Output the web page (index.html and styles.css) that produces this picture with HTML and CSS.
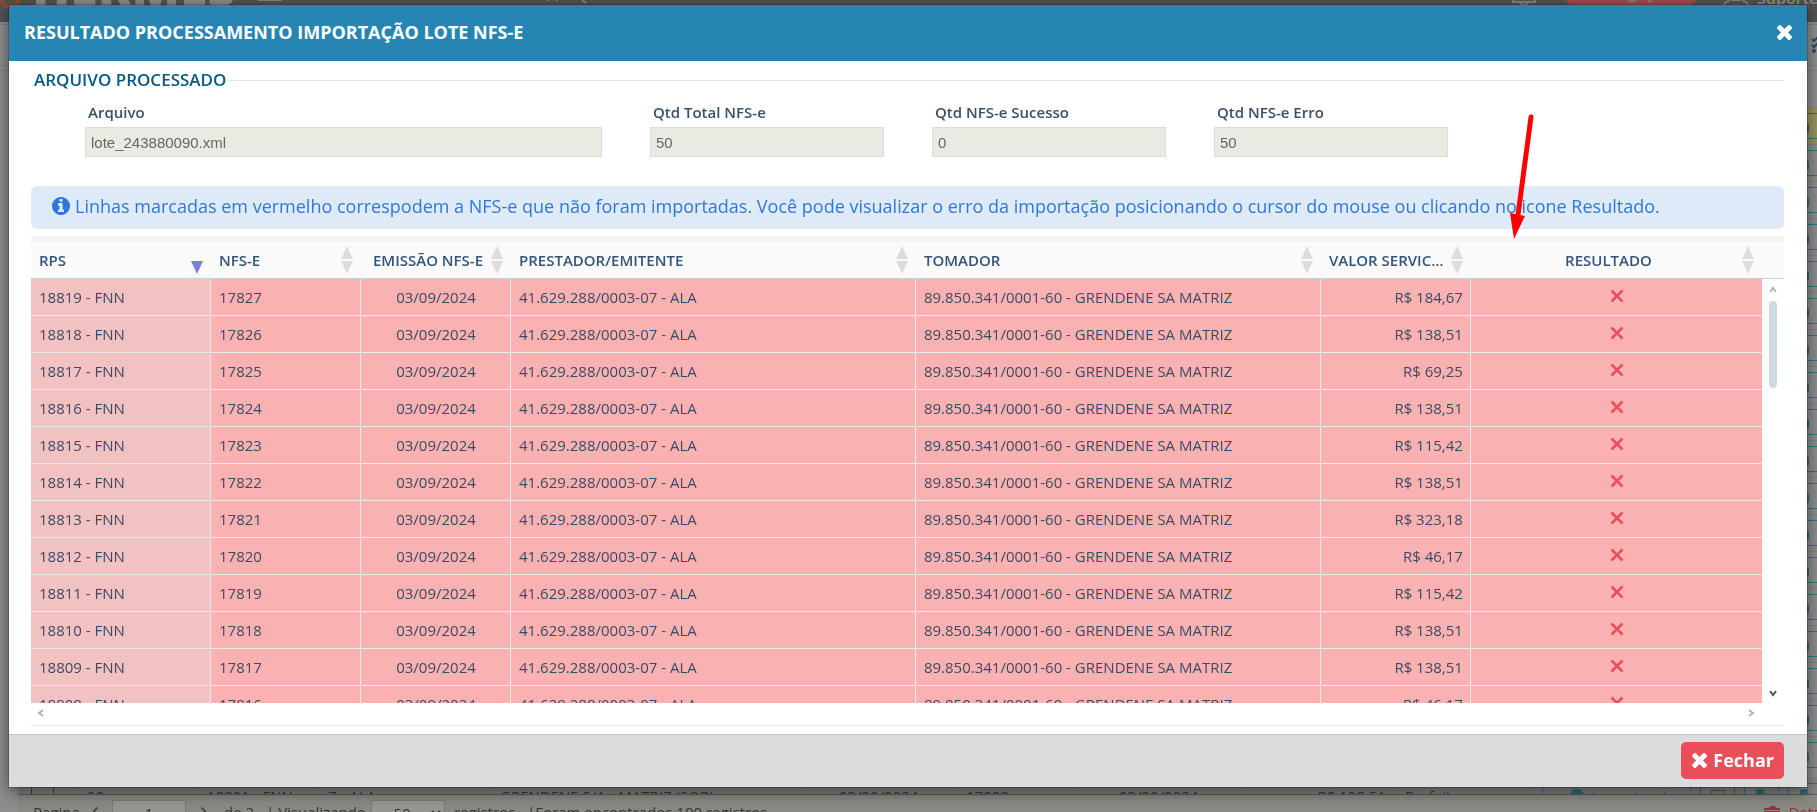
FILE: index.html
```html
<!DOCTYPE html>
<html lang="pt-BR">
<head>
<meta charset="utf-8">
<title>Resultado Processamento Importação Lote NFS-e</title>
<link rel="stylesheet" href="styles.css">
</head>
<body>
<svg class="defs" aria-hidden="true">
  <symbol id="times" viewBox="110 366 1188 1188"><path d="M1298 1322q0 40-28 68l-136 136q-28 28-68 28t-68-28l-294-294-294 294q-28 28-68 28t-68-28l-136-136q-28-28-28-68t28-68l294-294-294-294q-28-28-28-68t28-68l136-136q28-28 68-28t68 28l294 294 294-294q28-28 68-28t68 28l136 136q28 28 28 68t-28 68l-294 294 294 294q28 28 28 68z"/></symbol>
  <symbol id="info" viewBox="128 128 1536 1536"><path d="M1152 1376v-160q0-14-9-23t-23-9h-96v-512q0-14-9-23t-23-9h-320q-14 0-23 9t-9 23v160q0 14 9 23t23 9h96v320h-96q-14 0-23 9t-9 23v160q0 14 9 23t23 9h448q14 0 23-9t9-23zm-128-896v-160q0-14-9-23t-23-9h-192q-14 0-23 9t-9 23v160q0 14 9 23t23 9h192q14 0 23-9t9-23zm640 416q0 209-103 385.5t-279.5 279.5-385.5 103-385.5-103-279.5-279.5-103-385.5 103-385.5 279.5-279.5 385.5-103 385.5 103 279.5 279.5 103 385.5z"/></symbol>
  <symbol id="fail" viewBox="0 0 14 14"><path d="M1.5 1.5l11 11M12.5 1.5l-11 11" fill="none" stroke="currentColor" stroke-width="2.6"/></symbol>
  <symbol id="sort" viewBox="0 0 12 28"><path d="M6 0l6 13H0zM0 15h12L6 28z"/></symbol>
  <symbol id="chev" viewBox="0 0 8 8"><path d="M1 6l3-4 3 4" fill="none" stroke="currentColor" stroke-width="2"/></symbol>
  <symbol id="file" viewBox="0 0 14 16"><path d="M0 2q0-2 2-2h7v5h5v9q0 2-2 2H2q-2 0-2-2z"/></symbol>
</svg>

<div class="app">
  <header class="topbar">
    <svg class="brand-mark" viewBox="0 0 24 24"><circle cx="10" cy="-2" r="9" fill="none" stroke="#8a4a33" stroke-width="4"/></svg>
    <span class="brand">HERMES</span>
    <span class="menu-line"></span>
    <svg class="top-marks" viewBox="0 0 50 22"><path d="M2 0v1M11 0v1M36 0l4 3" stroke="#808080" stroke-width="2"/></svg>
    <svg class="monitor" viewBox="0 0 24 22"><path d="M1 0v2h22V0M8 2l2 3h4l2-3" fill="none" stroke="#808080" stroke-width="2"/></svg>
    <span class="pill">Navegação</span>
    <svg class="headset" viewBox="0 0 28 22"><path d="M2 6q0-5 6-5M26 6q0-5-6-5M9 0h10" fill="none" stroke="#808080" stroke-width="2"/></svg>
    <span class="support">Suporte</span>
  </header>
  <div class="toolbar"><svg class="checks" viewBox="0 0 10 20"><path d="M1 4l2 2 5-5M1 10l2 2 5-5" fill="none" stroke="#2b4a66" stroke-width="2"/><circle cx="3" cy="16" r="2" fill="#2b4a66"/></svg></div>
  <div class="subbar"></div>
  <div class="bg-rows">
    <div class="bg-row current"><button class="bg-btn" aria-label="Arquivo"><svg><use href="#file"/></svg></button></div>
    <div class="bg-row"><button class="bg-btn" aria-label="Arquivo"><svg><use href="#file"/></svg></button></div>
    <div class="bg-row"><button class="bg-btn" aria-label="Arquivo"><svg><use href="#file"/></svg></button></div>
    <div class="bg-row"><button class="bg-btn" aria-label="Arquivo"><svg><use href="#file"/></svg></button></div>
    <div class="bg-row"><button class="bg-btn" aria-label="Arquivo"><svg><use href="#file"/></svg></button></div>
    <div class="bg-row"><button class="bg-btn" aria-label="Arquivo"><svg><use href="#file"/></svg></button></div>
    <div class="bg-row"><button class="bg-btn" aria-label="Arquivo"><svg><use href="#file"/></svg></button></div>
    <div class="bg-row"><button class="bg-btn" aria-label="Arquivo"><svg><use href="#file"/></svg></button></div>
    <div class="bg-row"><button class="bg-btn" aria-label="Arquivo"><svg><use href="#file"/></svg></button></div>
    <div class="bg-row"><button class="bg-btn" aria-label="Arquivo"><svg><use href="#file"/></svg></button></div>
    <div class="bg-row"><button class="bg-btn" aria-label="Arquivo"><svg><use href="#file"/></svg></button></div>
    <div class="bg-row"><button class="bg-btn" aria-label="Arquivo"><svg><use href="#file"/></svg></button></div>
    <div class="bg-row"><button class="bg-btn" aria-label="Arquivo"><svg><use href="#file"/></svg></button></div>
    <div class="bg-row"><button class="bg-btn" aria-label="Arquivo"><svg><use href="#file"/></svg></button></div>
    <div class="bg-row"><button class="bg-btn" aria-label="Arquivo"><svg><use href="#file"/></svg></button></div>
    <div class="bg-row"><button class="bg-btn" aria-label="Arquivo"><svg><use href="#file"/></svg></button></div>
    <div class="bg-row"><button class="bg-btn" aria-label="Arquivo"><svg><use href="#file"/></svg></button></div>
    <div class="bg-row"><button class="bg-btn" aria-label="Arquivo"><svg><use href="#file"/></svg></button></div>
  </div>
  <div class="bg-last">
    <span class="dark"></span><span class="dark"></span><span>20</span><span>18801 - FNN</span><span>7 - ALA</span><span>GRENDENE S/A - MATRIZ (SOB)</span><span class="mid">03/09/2024</span><span>17808</span><span class="mid">03/09/2024</span><span class="end">R$ 138,51</span><span>Perfeito</span>
    <div class="bg-actions">
      <button class="status"><i></i>Importando</button>
      <button class="act grey" aria-label="E-mail"><b></b></button>
      <button class="act" aria-label="PDF"><svg><use href="#file"/></svg></button>
      <button class="act" aria-label="XML"><svg><use href="#file"/></svg></button>
    </div>
  </div>
  <footer class="pager">
    <label for="pg" class="pg-label">Pagina</label>
    <svg class="pg-arrow" viewBox="0 0 10 16"><path d="M8 1L2 8l6 7" fill="none" stroke="#3a3a38" stroke-width="2"/></svg>
    <input id="pg" class="pg-field" value="1">
    <svg class="pg-arrow next" viewBox="0 0 10 16"><path d="M2 1l6 7-6 7" fill="none" stroke="#3a3a38" stroke-width="2"/></svg>
    <span class="pg-total">de 2</span><label for="pp" class="pg-view">| Visualizando</label>
    <select id="pp" class="pg-field"><option>50</option></select>
    <span class="pg-reg">registros.</span><span>|Foram encontrados 100 registros</span>
    <a class="details" href="#"><svg viewBox="0 0 16 16"><path d="M0 3h5l1-2h5l1 2h4v2H0zM0 6h16v10H0z"/></svg>Detalhes</a>
  </footer>
</div>

<div class="modal" role="dialog" aria-labelledby="title">
  <div class="modal-head">
    <h1 id="title">RESULTADO PROCESSAMENTO IMPORTAÇÃO LOTE NFS-E</h1>
    <button class="close" aria-label="Fechar"><svg><use href="#times"/></svg></button>
  </div>
  <div class="modal-body">
    <h2 class="legend">ARQUIVO PROCESSADO</h2>
    <div class="fields">
      <div class="field"><label for="f1">Arquivo</label><input id="f1" readonly value="lote_243880090.xml"></div>
      <div class="field"><label for="f2">Qtd Total NFS-e</label><input id="f2" readonly value="50"></div>
      <div class="field"><label for="f3">Qtd NFS-e Sucesso</label><input id="f3" readonly value="0"></div>
      <div class="field"><label for="f4">Qtd NFS-e Erro</label><input id="f4" readonly value="50"></div>
    </div>
    <p class="alert"><svg><use href="#info"/></svg>Linhas marcadas em vermelho correspodem a NFS-e que não foram importadas. Você pode visualizar o erro da importação posicionando o cursor do mouse ou clicando no icone Resultado.</p>
    <div class="grid">
      <table>
        <colgroup><col class="c-rps"><col class="c-s"><col class="c-s"><col class="c-l"><col class="c-l"><col class="c-s"><col><col class="c-sb"></colgroup>
        <thead>
          <tr>
            <th><div class="th"><span>RPS</span><svg class="sorted"><use href="#sort"/></svg></div></th>
            <th><div class="th"><span>NFS-E</span><svg><use href="#sort"/></svg></div></th>
            <th><div class="th c"><span>EMISSÃO NFS-E</span><svg><use href="#sort"/></svg></div></th>
            <th><div class="th"><span>PRESTADOR/EMITENTE</span><svg><use href="#sort"/></svg></div></th>
            <th><div class="th"><span>TOMADOR</span><svg><use href="#sort"/></svg></div></th>
            <th><div class="th"><span>VALOR SERVICOS</span><svg><use href="#sort"/></svg></div></th>
            <th><div class="th c"><span>RESULTADO</span><svg><use href="#sort"/></svg></div></th>
            <th></th>
          </tr>
        </thead>
        <tbody>
          <tr><td>18819 - FNN</td><td>17827</td><td>03/09/2024</td><td>41.629.288/0003-07 - ALA</td><td>89.850.341/0001-60 - GRENDENE SA MATRIZ</td><td>R$ 184,67</td><td><svg><use href="#fail"/></svg></td></tr>
          <tr><td>18818 - FNN</td><td>17826</td><td>03/09/2024</td><td>41.629.288/0003-07 - ALA</td><td>89.850.341/0001-60 - GRENDENE SA MATRIZ</td><td>R$ 138,51</td><td><svg><use href="#fail"/></svg></td></tr>
          <tr><td>18817 - FNN</td><td>17825</td><td>03/09/2024</td><td>41.629.288/0003-07 - ALA</td><td>89.850.341/0001-60 - GRENDENE SA MATRIZ</td><td>R$ 69,25</td><td><svg><use href="#fail"/></svg></td></tr>
          <tr><td>18816 - FNN</td><td>17824</td><td>03/09/2024</td><td>41.629.288/0003-07 - ALA</td><td>89.850.341/0001-60 - GRENDENE SA MATRIZ</td><td>R$ 138,51</td><td><svg><use href="#fail"/></svg></td></tr>
          <tr><td>18815 - FNN</td><td>17823</td><td>03/09/2024</td><td>41.629.288/0003-07 - ALA</td><td>89.850.341/0001-60 - GRENDENE SA MATRIZ</td><td>R$ 115,42</td><td><svg><use href="#fail"/></svg></td></tr>
          <tr><td>18814 - FNN</td><td>17822</td><td>03/09/2024</td><td>41.629.288/0003-07 - ALA</td><td>89.850.341/0001-60 - GRENDENE SA MATRIZ</td><td>R$ 138,51</td><td><svg><use href="#fail"/></svg></td></tr>
          <tr><td>18813 - FNN</td><td>17821</td><td>03/09/2024</td><td>41.629.288/0003-07 - ALA</td><td>89.850.341/0001-60 - GRENDENE SA MATRIZ</td><td>R$ 323,18</td><td><svg><use href="#fail"/></svg></td></tr>
          <tr><td>18812 - FNN</td><td>17820</td><td>03/09/2024</td><td>41.629.288/0003-07 - ALA</td><td>89.850.341/0001-60 - GRENDENE SA MATRIZ</td><td>R$ 46,17</td><td><svg><use href="#fail"/></svg></td></tr>
          <tr><td>18811 - FNN</td><td>17819</td><td>03/09/2024</td><td>41.629.288/0003-07 - ALA</td><td>89.850.341/0001-60 - GRENDENE SA MATRIZ</td><td>R$ 115,42</td><td><svg><use href="#fail"/></svg></td></tr>
          <tr><td>18810 - FNN</td><td>17818</td><td>03/09/2024</td><td>41.629.288/0003-07 - ALA</td><td>89.850.341/0001-60 - GRENDENE SA MATRIZ</td><td>R$ 138,51</td><td><svg><use href="#fail"/></svg></td></tr>
          <tr><td>18809 - FNN</td><td>17817</td><td>03/09/2024</td><td>41.629.288/0003-07 - ALA</td><td>89.850.341/0001-60 - GRENDENE SA MATRIZ</td><td>R$ 138,51</td><td><svg><use href="#fail"/></svg></td></tr>
          <tr><td>18808 - FNN</td><td>17816</td><td>03/09/2024</td><td>41.629.288/0003-07 - ALA</td><td>89.850.341/0001-60 - GRENDENE SA MATRIZ</td><td>R$ 46,17</td><td><svg><use href="#fail"/></svg></td></tr>
        </tbody>
      </table>
      <div class="vbar"><svg><use href="#chev"/></svg><div class="thumb"></div><svg class="down"><use href="#chev"/></svg></div>
    </div>
    <div class="hbar"><svg class="left"><use href="#chev"/></svg><svg class="right"><use href="#chev"/></svg></div>
  </div>
  <div class="modal-foot">
    <button class="btn-close"><svg><use href="#times"/></svg>Fechar</button>
  </div>
  <svg class="pointer" viewBox="0 0 32 130"><path d="M23 4L10 102" stroke="#f00" stroke-width="5" stroke-linecap="round"/><path d="M2 100l15 3L6 126z" fill="#f00"/></svg>
</div>
</body>
</html>
```

FILE: styles.css
```css
* { box-sizing: border-box; }
html, body { height: 100%; margin: 0; }
body { font: 15px/20px "Open Sans", "Noto Sans", sans-serif; color: #3b4b63; overflow: hidden; }
button, input, select { font: inherit; margin: 0; }
svg { fill: currentColor; flex: none; }
.defs { position: absolute; width: 0; height: 0; }

/* page behind the dialog */
.app { height: 100vh; display: flex; flex-direction: column; background: #8e8e8e; overflow: hidden; color: #33363a; }
.topbar { flex: none; height: 22px; display: flex; background: #515151; overflow: hidden; color: #8c8c8c; }
.brand-mark { width: 24px; height: 24px; }
.brand { margin-left: 8px; width: 216px; font-size: 50px; font-weight: 800; line-height: 22px; margin-top: -24px; color: #888; }
.menu-line { width: 24px; height: 1px; margin-left: 10px; background: #808080; }
.top-marks { width: 50px; height: 22px; margin-left: 264px; }
.monitor { width: 24px; height: 22px; margin-left: auto; }
.pill { height: 14px; width: 136px; margin-top: -8px; margin-left: 27px; border-radius: 0 0 20px 20px; background: #9c494c; font-weight: 600; line-height: 2px; text-align: center; }
.headset { width: 28px; height: 22px; margin: 0 7px 0 23px; }
.support { width: 60px; margin-top: -2px; font-size: 16px; font-weight: 600; line-height: 0; }
.toolbar { flex: none; height: 42px; margin-top: 2px; border: solid #75808a; border-width: 1px 0; display: flex; align-items: center; justify-content: flex-end; }
.checks { width: 10px; height: 20px; margin-right: -4px; }
.subbar { flex: none; height: 37px; margin-top: 4px; border-top: 1px solid #808080; }
.bg-rows { flex: 1 1 0; min-height: 0; overflow: hidden; margin-left: 18px; }
.bg-row { height: 37px; display: flex; align-items: center; justify-content: flex-end; border-top: 1px solid #808080; background: #8c8c8c; }
.bg-row.current { background: #979260; }
.bg-btn { width: 30px; height: 26px; margin-right: -10px; border: 1px solid #2c7680; background: none; padding: 0; display: flex; align-items: center; color: #2c6c74; }
.bg-btn svg { width: 11px; height: 13px; }
.bg-last { flex: none; height: 18px; margin-left: 18px; padding-left: 13px; overflow: hidden; display: grid; grid-template-columns: 22px 24px 120px 121px 172px 310px 156px 120px 164px 155px 138px 1fr; background: #848484; border-bottom: 1px solid #5b5b5b; line-height: 20px; padding-top: 9px; }
.bg-last span { border-left: 1px solid #777; padding-left: 9px; white-space: nowrap; }
.bg-last .dark { border-color: #444; }
.bg-last .mid { text-align: center; padding: 0; }
.bg-last .end { text-align: right; padding-right: 9px; }
.bg-actions { display: flex; gap: 9px; padding-left: 8px; margin-top: -3px; border-left: 1px solid #777; }
.status, .act { height: 26px; border: 1px solid #2c7680; background: none; color: #2c6c74; padding: 0; flex: none; }
.status { width: 149px; display: flex; align-items: center; gap: 8px; padding-left: 27px; }
.status i { width: 14px; height: 14px; border-radius: 50%; background: currentColor; }
.act { width: 35px; display: flex; align-items: center; justify-content: center; }
.act svg { width: 12px; height: 14px; }
.act.grey { border-color: #555; }
.act b { width: 14px; height: 12px; border: 1px solid #555; }
.pager { flex: none; height: 17px; margin-left: 18px; padding: 5px 0 0 15px; display: flex; background: #8a8a84; line-height: 24px; overflow: hidden; white-space: nowrap; }
.pg-label { width: 46px; }
.pg-arrow { width: 8px; height: 14px; margin: 6px 13px 0 12px; }
.pg-arrow.next { margin: 6px 16px 0 14px; }
.pg-field { width: 74px; height: 26px; padding: 0; border: 1px solid #7a7a7a; background: #969692; color: inherit; text-align: center; flex: none; }
.pg-total { width: 42px; }
.pg-view { width: 105px; }
.pg-reg { width: 73px; margin-left: 9px; }
.details { margin-left: auto; margin-right: -33px; color: #93343b; text-decoration: none; display: flex; gap: 8px; }
.details svg { width: 16px; height: 16px; margin-top: 5px; }

/* dialog */
.modal { position: fixed; top: 5px; right: 10px; bottom: 25px; left: 9px; display: flex; flex-direction: column; background: #fff; box-shadow: 0 5px 15px rgba(0, 0, 0, .5), 0 0 0 1px rgba(0, 0, 0, .2); }
.modal-head { flex: none; height: 56px; padding: 0 15px 2px; display: flex; align-items: center; justify-content: space-between; background: #2685b2; color: #fff; }
.modal-head h1 { margin: 0; font-size: 18px; line-height: 24px; font-weight: 700; }
.close { border: 0; background: none; padding: 0; color: inherit; display: flex; }
.close svg { width: 15px; height: 15px; }
.modal-body { flex: 1; min-height: 0; display: flex; flex-direction: column; padding: 7px 23px 8px 22px; }
.legend { margin: 0; padding-left: 3px; display: flex; align-items: center; gap: 3px; font-size: 17px; line-height: 24px; font-weight: 600; color: #045a80; }
.legend::after { content: ""; flex: 1; height: 1px; background: #dfe4ee; }
.fields { display: grid; grid-template-columns: 517fr 234fr 234fr 234fr 288fr; gap: 48px; padding: 10px 0 29px 54px; }
.field { display: flex; flex-direction: column; }
.field label { font-weight: 600; padding-left: 3px; line-height: 20px; margin-bottom: 5px; color: #3b4f69; }
.field input { width: 100%; height: 30px; padding: 0 5px; border: 1px solid #dcdcdc; background: #eaeae2; color: #666; font: 15px "Liberation Sans", Arial, sans-serif; }
.alert { margin: 0 0 7px; height: 43px; padding: 0 21px 3px; display: flex; align-items: center; gap: 5px; border-radius: 6px; background: #dfeaf8; color: #3078d8; font-size: 18px; line-height: 24px; white-space: nowrap; }
.alert svg { width: 18px; height: 18px; }
.grid { flex: 1; min-height: 0; position: relative; overflow: hidden; border-top: 6px solid #f4f4f4; }
table { width: 100%; table-layout: fixed; border-collapse: separate; border-spacing: 0; }
.c-rps { width: 180px; }
.c-s { width: 150px; }
.c-l { width: 23.1%; }
.c-sb { width: 22px; }
th { height: 37px; padding: 0; background: #fafafa; border-bottom: 1px solid #c8d3d8; color: #34557a; font-weight: 600; text-align: left; }
.th { display: flex; align-items: center; gap: 4px; padding: 0 8px; }
.th span { flex: 1; overflow: hidden; text-overflow: ellipsis; white-space: nowrap; }
.th svg { width: 12px; height: 28px; color: #dcdcdc; }
.th .sorted { color: #7b7fe0; clip-path: inset(15px 0 0 0); }
.th.c span { text-align: center; }
td { height: 37px; padding: 0 7px 0 8px; background: #fab1b2; border: solid #e6eaee; border-width: 0 1px 1px 0; white-space: nowrap; }
td:nth-child(1) { background: #f2c1c2; }
td:nth-child(3), td:nth-child(7) { text-align: center; }
td:nth-child(6) { text-align: right; }
td:nth-child(7) { border-right: 0; color: #e8505b; }
td svg { display: block; width: 14px; height: 14px; margin: 0 auto 2px; }
.vbar { position: absolute; top: 37px; right: 0; bottom: 0; width: 22px; padding: 7px 0 6px; display: flex; flex-direction: column; align-items: center; color: #b4b4b4; }
.vbar svg, .hbar svg { width: 8px; height: 8px; }
.thumb { width: 8px; height: 87px; margin-top: 7px; border-radius: 4px; background: #cfdae3; }
.vbar .down { margin-top: auto; color: #555; transform: rotate(180deg); }
.hbar { flex: none; height: 23px; padding: 0 29px 3px 6px; display: flex; justify-content: space-between; align-items: center; color: #b4b4b4; border-bottom: 1px solid #e8e8e8; }
.left { transform: rotate(-90deg); }
.right { transform: rotate(90deg); }
.modal-foot { flex: none; height: 53px; padding: 0 23px 2px; display: flex; align-items: center; justify-content: flex-end; background: #dcdcdc; border-top: 1px solid #c6c6c6; }
.btn-close { height: 37px; padding: 0 10px 0 11px; display: flex; align-items: center; gap: 6px; border: 0; border-radius: 5px; background: #e84f5b; color: #fff; font-size: 18px; font-weight: 700; }
.btn-close svg { width: 15px; height: 15px; }
.pointer { position: absolute; top: 108px; right: 267px; width: 32px; height: 130px; }
```
